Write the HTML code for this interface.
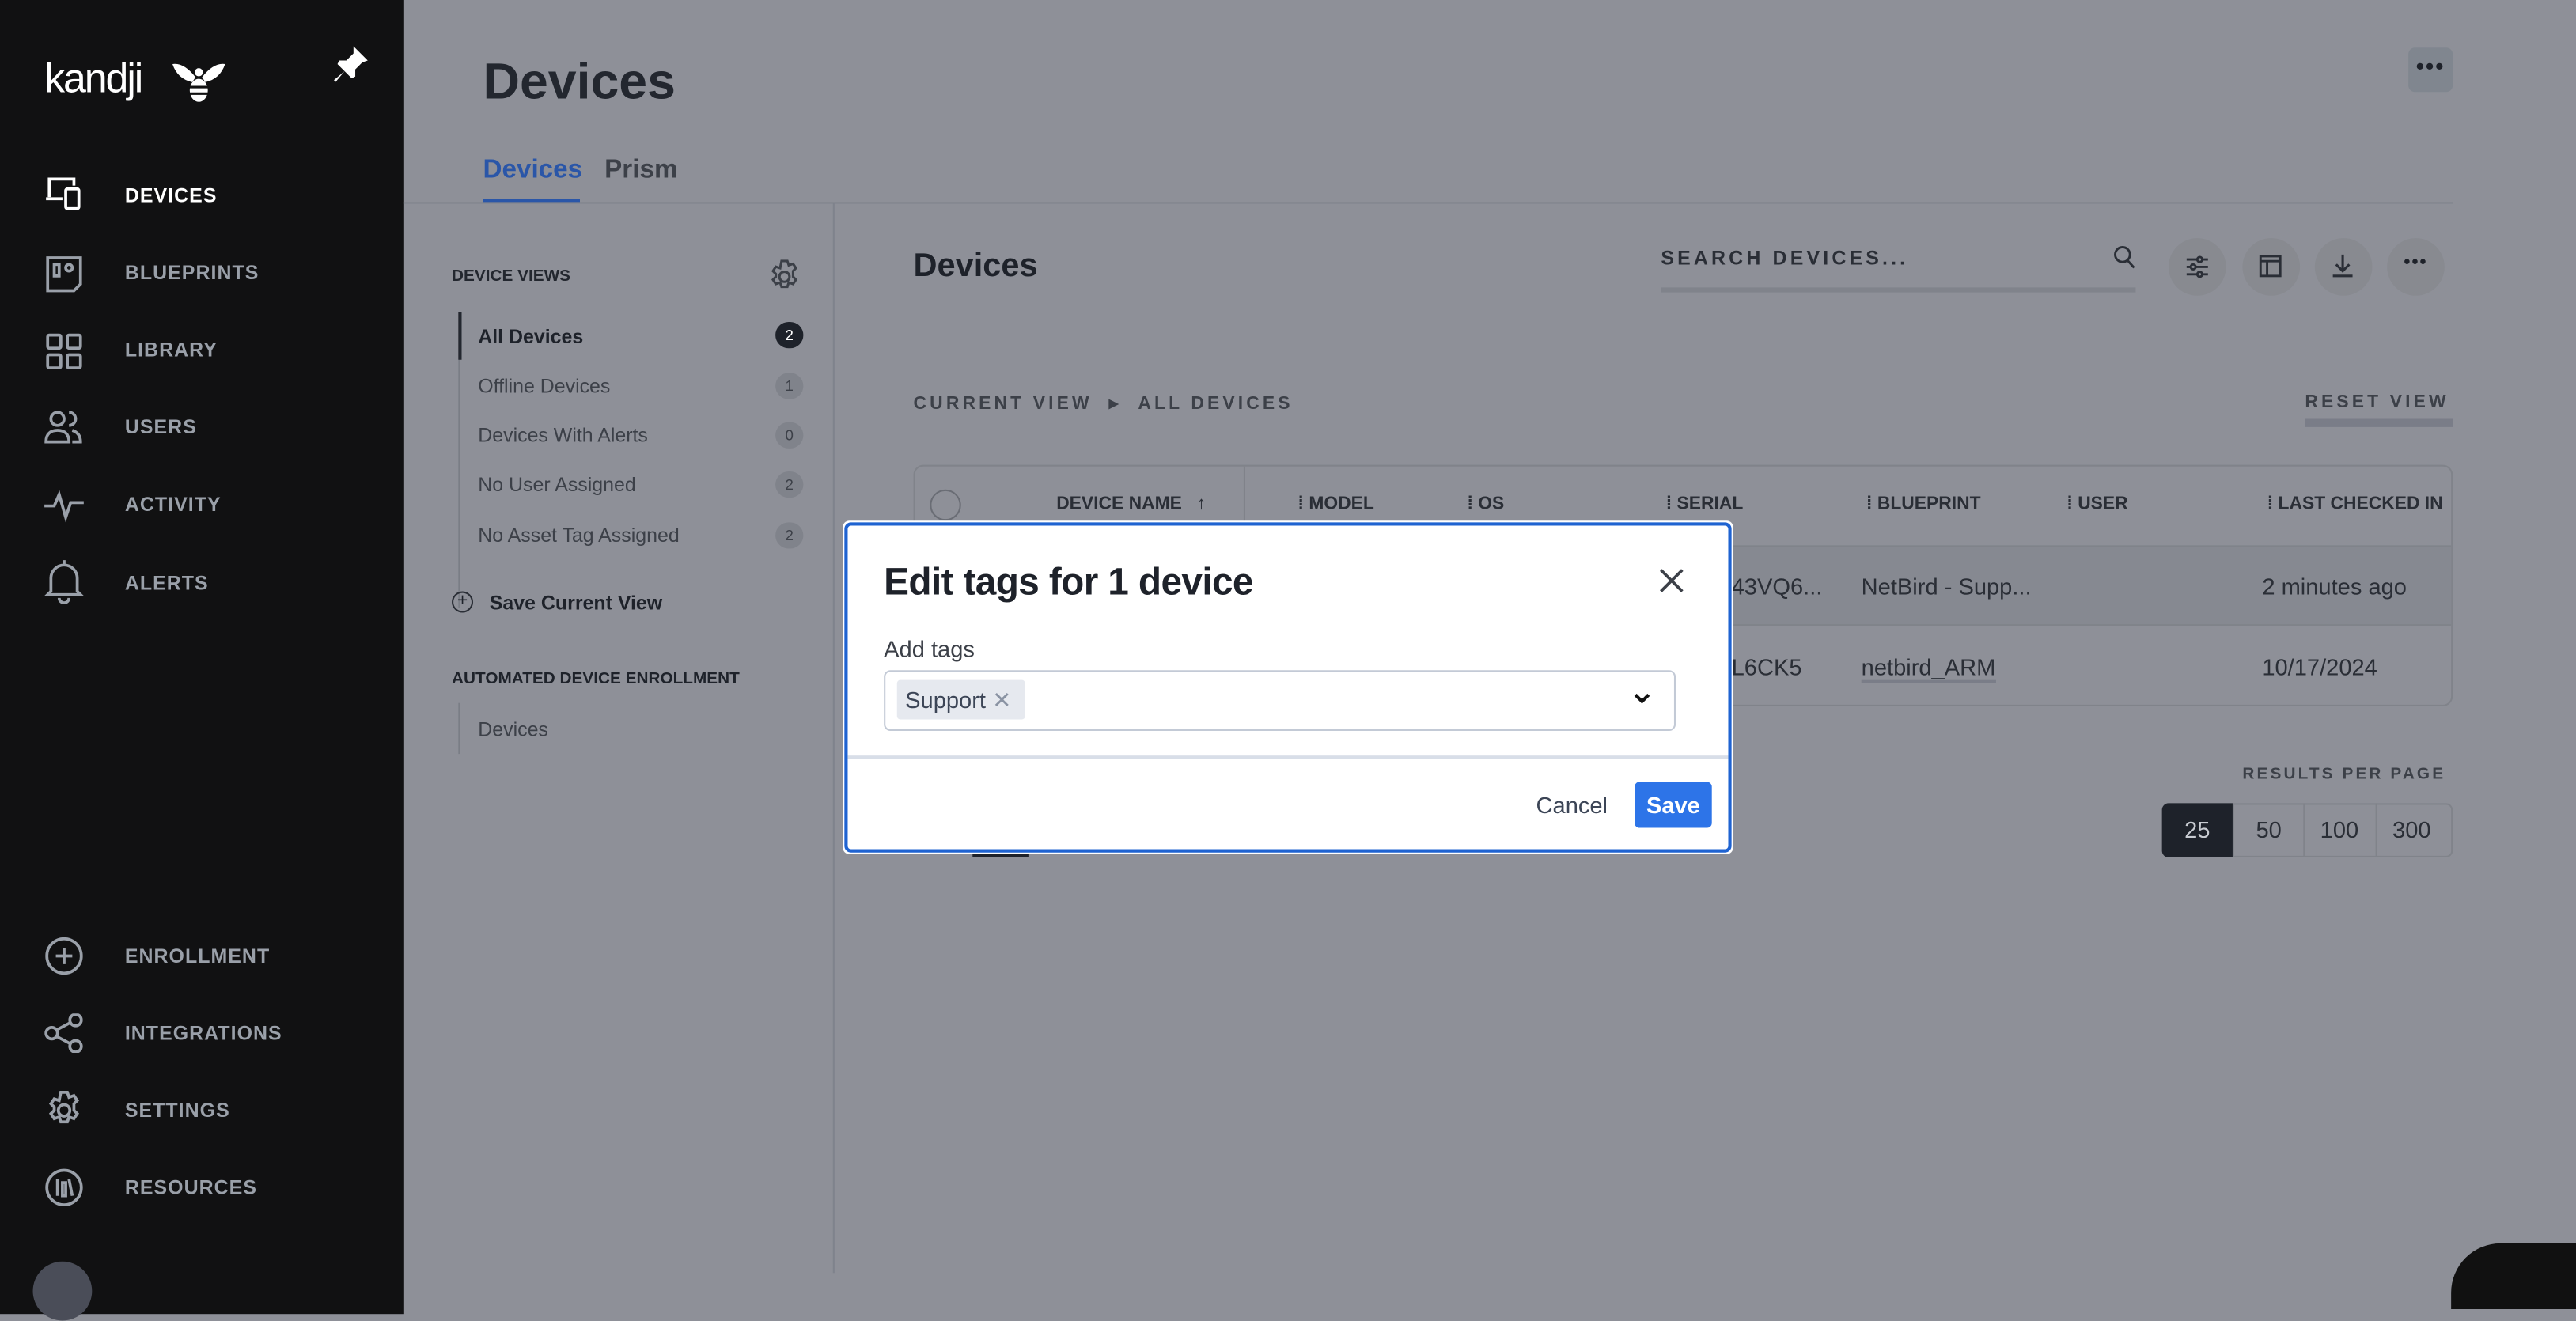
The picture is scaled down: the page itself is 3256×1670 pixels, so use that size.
<!DOCTYPE html>
<html><head><meta charset="utf-8"><style>
*{box-sizing:border-box;margin:0;padding:0}
html,body{width:3256px;height:1608px;overflow:hidden;background:#8e9098}
#w{position:absolute;left:0;top:0;width:1568px;height:775px;transform:scale(2.0765);transform-origin:0 0;font-family:"Liberation Sans",sans-serif;color:#1e222a}
.a{position:absolute}
#sb{left:0;top:0;width:246px;height:800px;background:#111112}
.ni{position:absolute;left:76px;font-size:12px;font-weight:bold;letter-spacing:.5px;color:#9aa0a9}
.ic{position:absolute;left:27px}
.dv{font-size:12px;color:#3c4048}
.bd{position:absolute;left:472px;width:17px;height:16px;border-radius:8px;background:#80838b;font-size:9px;text-align:center;line-height:16px;color:#3c4048}
.cb{position:absolute;top:145px;width:35px;height:35px;border-radius:50%;background:#888a90}
.th{position:absolute;top:301px;font-size:11px;font-weight:bold;color:#2a2e36}
.td{position:absolute;font-size:14px;color:#2a2e36}
.pg{position:absolute;top:489px;height:33px;width:43px;text-align:center;line-height:33px;font-size:14px;color:#2a2e36;border-left:1px solid #80838a}
</style></head><body><div id="w">
<div id="sb" class="a">
 <div class="a" style="left:27px;top:34px;font-size:25px;color:#fff;letter-spacing:-1px">kandji</div>
 <svg class="a" style="left:104px;top:36px" width="34" height="28" viewBox="0 0 34 28"><path d="M1 3 Q8 2 15 11 L13 14 Q4 12 1 3Z M33 3 Q26 2 19 11 L21 14 Q30 12 33 3Z" fill="#fff"/><circle cx="17" cy="8" r="2.5" fill="#fff"/><ellipse cx="17" cy="19" rx="5.5" ry="7" fill="#fff"/><path d="M11 17h12M11 21h12" stroke="#111" stroke-width="1.5"/></svg>
 <svg class="a" style="left:200px;top:26px" width="26" height="26" viewBox="0 0 24 24"><path d="M14 2l8 8-3 1-4 4 0 4-2 1-4-4-5 6-1-1 6-5-4-4 1-2h4l4-4z" fill="#fff"/></svg>
 <svg class="ic" style="top:107px" width="24" height="22" viewBox="0 0 24 22" fill="none" stroke="#fff" stroke-width="1.8"><path d="M3 13V2h15v4M1 14h10"/><rect x="13" y="8" width="8" height="12" rx="1"/></svg>
 <div class="ni" style="top:112px;color:#fff">DEVICES</div>
 <svg class="ic" style="top:155px" width="24" height="24" viewBox="0 0 24 24" fill="none" stroke="#9aa0a9" stroke-width="1.8"><path d="M2 2h20v16l-4 4H2z"/><rect x="6" y="6" width="3" height="7"/><circle cx="15" cy="8" r="2"/></svg>
 <div class="ni" style="top:159px">BLUEPRINTS</div>
 <svg class="ic" style="top:202px" width="24" height="24" viewBox="0 0 24 24" fill="none" stroke="#9aa0a9" stroke-width="1.8"><rect x="2" y="2" width="8" height="8" rx="1"/><rect x="14" y="2" width="8" height="8" rx="1"/><rect x="2" y="14" width="8" height="8" rx="1"/><rect x="14" y="14" width="8" height="8" rx="1"/></svg>
 <div class="ni" style="top:206px">LIBRARY</div>
 <svg class="ic" style="top:249px" width="24" height="22" viewBox="0 0 24 22" fill="none" stroke="#9aa0a9" stroke-width="1.8"><circle cx="8" cy="6" r="4"/><path d="M1 20c0-5 3-7 7-7s7 2 7 7z"/><path d="M15 2a4 4 0 010 8M17 13c3 1 5 3 5 7h-5" /></svg>
 <div class="ni" style="top:253px">USERS</div>
 <svg class="ic" style="top:296px" width="24" height="22" viewBox="0 0 24 22" fill="none" stroke="#9aa0a9" stroke-width="1.8"><path d="M0 12h6l3-7 4 14 3-9h8"/></svg>
 <div class="ni" style="top:300px">ACTIVITY</div>
 <svg class="ic" style="top:340px" width="24" height="28" viewBox="0 0 24 28" fill="none" stroke="#9aa0a9" stroke-width="1.8"><path d="M4 20V12a8 8 0 0116 0v8l2 2H2zM12 1v3M9 24a3 3 0 006 0"/></svg>
 <div class="ni" style="top:348px">ALERTS</div>
 <svg class="ic" style="top:570px" width="24" height="24" viewBox="0 0 24 24" fill="none" stroke="#9aa0a9" stroke-width="1.8"><circle cx="12" cy="12" r="10.5"/><path d="M12 7v10M7 12h10"/></svg>
 <div class="ni" style="top:575px">ENROLLMENT</div>
 <svg class="ic" style="top:617px" width="24" height="24" viewBox="0 0 24 24" fill="none" stroke="#9aa0a9" stroke-width="1.8"><circle cx="4.5" cy="12" r="3.5"/><circle cx="19" cy="4" r="3.5"/><circle cx="19" cy="20" r="3.5"/><path d="M7.5 10l8.5-4.5M7.5 14l8.5 4.5"/></svg>
 <div class="ni" style="top:622px">INTEGRATIONS</div>
 <svg class="ic" style="top:664px" width="24" height="24" viewBox="0 0 24 24" fill="none" stroke="#9aa0a9" stroke-width="1.8"><circle cx="12" cy="12" r="3.5"/><path d="M10 1h4l1 3 3-1 2 3-2 2v4l2 2-2 3-3-1-1 3h-4l-1-3-3 1-2-3 2-2V10L4 8l2-3 3 1z"/></svg>
 <div class="ni" style="top:669px">SETTINGS</div>
 <svg class="ic" style="top:711px" width="24" height="24" viewBox="0 0 24 24" fill="none" stroke="#9aa0a9" stroke-width="1.8"><circle cx="12" cy="12" r="10.5"/><path d="M8 7v10M11 9v8h2V9zM15 7l2 10"/></svg>
 <div class="ni" style="top:716px">RESOURCES</div>
 <div class="a" style="left:20px;top:768px;width:36px;height:36px;border-radius:50%;background:#4a4d58"></div>
</div>
<div class="a" style="left:294px;top:32px;font-size:31px;font-weight:bold;color:#23272f">Devices</div>
<div class="a" style="left:1466px;top:29px;width:27px;height:27px;border-radius:4px;background:#80868f;text-align:center;font-size:14px;line-height:22px;font-weight:bold;letter-spacing:1px">•••</div>
<div class="a" style="left:294px;top:95px;font-size:16px;font-weight:bold;color:#2a56a8">Devices</div>
<div class="a" style="left:368px;top:95px;font-size:16px;font-weight:bold;color:#3c4048">Prism</div>
<div class="a" style="left:294px;top:121px;width:59px;height:2px;background:#2a56a8"></div>
<div class="a" style="left:246px;top:123px;width:1247px;height:1px;background:#7f838c"></div>
<div class="a" style="left:507px;top:124px;width:1px;height:651px;background:#7f838c"></div>
<div class="a" style="left:275px;top:163px;font-size:10px;font-weight:bold;color:#23272f">DEVICE VIEWS</div>
<svg class="a" style="left:467px;top:158px" width="21" height="21" viewBox="0 0 24 24" fill="none" stroke="#3c4048" stroke-width="1.7"><circle cx="12" cy="12" r="3.5"/><path d="M10 1h4l1 3 3-1 2 3-2 2v4l2 2-2 3-3-1-1 3h-4l-1-3-3 1-2-3 2-2V10L4 8l2-3 3 1z"/></svg>
<div class="a" style="left:279px;top:190px;width:1px;height:180px;background:#7a7d85"></div>
<div class="a" style="left:279px;top:190px;width:2px;height:29px;background:#23272f"></div>
<div class="a dv" style="left:291px;top:198px;font-weight:bold;color:#1e222a">All Devices</div><div class="bd" style="top:196px;background:#1e222a;color:#fff">2</div>
<div class="a dv" style="left:291px;top:228px">Offline Devices</div><div class="bd" style="top:227px">1</div>
<div class="a dv" style="left:291px;top:258px">Devices With Alerts</div><div class="bd" style="top:257px">0</div>
<div class="a dv" style="left:291px;top:288px">No User Assigned</div><div class="bd" style="top:287px">2</div>
<div class="a dv" style="left:291px;top:319px">No Asset Tag Assigned</div><div class="bd" style="top:318px">2</div>
<div class="a" style="left:275px;top:360px;width:13px;height:13px;border:1.2px solid #2a2e36;border-radius:50%;font-size:11px;line-height:10px;text-align:center">+</div>
<div class="a" style="left:298px;top:360px;font-size:12px;font-weight:bold">Save Current View</div>
<div class="a" style="left:275px;top:408px;font-size:10px;font-weight:bold">AUTOMATED DEVICE ENROLLMENT</div>
<div class="a" style="left:279px;top:428px;width:1px;height:31px;background:#7a7d85"></div>
<div class="a dv" style="left:291px;top:437px">Devices</div>
<div class="a" style="left:556px;top:151px;font-size:20px;font-weight:bold">Devices</div>
<div class="a" style="left:1011px;top:150px;font-size:12px;font-weight:bold;letter-spacing:2px;color:#2a2e36">SEARCH DEVICES...</div>
<div class="a" style="left:1011px;top:175px;width:289px;height:3px;background:#80838b"></div>
<svg class="a" style="left:1286px;top:149px" width="14" height="15" viewBox="0 0 14 15" fill="none" stroke="#2a2e36" stroke-width="1.4"><circle cx="6" cy="6" r="4.5"/><path d="M9 9.5l4 4.5"/></svg>
<div class="cb" style="left:1320px"></div><div class="cb" style="left:1365px"></div><div class="cb" style="left:1409px"></div><div class="cb" style="left:1453px"></div>
<svg class="a" style="left:1330px;top:155px" width="15" height="15" viewBox="0 0 15 15" fill="none" stroke="#2a2e36" stroke-width="1.4"><path d="M1 3h13M1 7.5h13M1 12h13"/><circle cx="9" cy="3" r="1.5" fill="#888a90"/><circle cx="5" cy="7.5" r="1.5" fill="#888a90"/><circle cx="9" cy="12" r="1.5" fill="#888a90"/></svg>
<svg class="a" style="left:1375px;top:155px" width="14" height="14" viewBox="0 0 14 14" fill="none" stroke="#2a2e36" stroke-width="1.4"><rect x="1" y="1" width="12" height="12"/><path d="M1 4h12M5 4v9"/></svg>
<svg class="a" style="left:1419px;top:154px" width="14" height="15" viewBox="0 0 14 15" fill="none" stroke="#2a2e36" stroke-width="1.5"><path d="M7 1v10M3 7l4 4 4-4M1 14h12"/></svg>
<div class="a" style="left:1453px;top:154px;width:35px;text-align:center;font-size:11px;font-weight:bold;letter-spacing:1px">•••</div>
<div class="a" style="left:556px;top:239px;font-size:11px;font-weight:bold;letter-spacing:2px;color:#3c4048">CURRENT VIEW &nbsp;▸ &nbsp;ALL DEVICES</div>
<div class="a" style="left:1403px;top:239px;font-size:11px;font-weight:bold;letter-spacing:2px;color:#3c4048">RESET VIEW</div>
<div class="a" style="left:1403px;top:255px;width:90px;height:5px;background:#7a7d88"></div>
<div class="a" style="left:556px;top:283px;width:937px;height:147px;border:1px solid #80838a;border-radius:6px;background:#8e9098;overflow:hidden">
 <div class="a" style="left:0;top:48px;width:937px;height:49px;background:#868991;border-top:1px solid #80838a;border-bottom:1px solid #80838a"></div>
</div>
<div class="a" style="left:566px;top:298px;width:19px;height:19px;border:1.3px solid #6a6d75;border-radius:50%"></div>
<div class="th" style="left:643px">DEVICE NAME &nbsp; ↑</div>
<div class="a" style="left:757px;top:284px;width:1px;height:48px;background:#80838a"></div>
<div class="th" style="left:790px">⁞ MODEL</div><div class="th" style="left:893px">⁞ OS</div><div class="th" style="left:1014px">⁞ SERIAL</div><div class="th" style="left:1136px">⁞ BLUEPRINT</div><div class="th" style="left:1258px">⁞ USER</div><div class="th" style="left:1380px">⁞ LAST CHECKED IN</div>
<div class="td" style="left:1054px;top:349px">43VQ6...</div><div class="td" style="left:1133px;top:349px">NetBird - Supp...</div><div class="td" style="left:1377px;top:349px">2 minutes ago</div>
<div class="td" style="left:1054px;top:398px">L6CK5</div><div class="td" style="left:1133px;top:398px;border-bottom:2px solid #7a7d88">netbird_ARM</div><div class="td" style="left:1377px;top:398px">10/17/2024</div>
<div class="a" style="left:1365px;top:466px;font-size:10px;font-weight:bold;letter-spacing:1.5px;color:#3c4048">RESULTS PER PAGE</div>
<div class="a" style="left:1316px;top:489px;width:177px;height:33px;border:1px solid #80838a;border-radius:4px;overflow:hidden"></div>
<div class="pg" style="left:1316px;background:#1e222a;color:#c8cbd1;border:0;border-radius:4px 0 0 4px">25</div><div class="pg" style="left:1359px">50</div><div class="pg" style="left:1402px">100</div><div class="pg" style="left:1446px">300</div>
<div class="a" style="left:592px;top:517px;width:34px;height:5px;background:#1e222a"></div>
<div class="a" style="left:1492px;top:757px;width:80px;height:40px;border-radius:30px 0 0 0;background:#111"></div>
<div class="a" style="left:513px;top:317px;width:542px;height:203px;background:#fff;border-radius:4px;padding:1px">
 <div style="position:relative;width:540px;height:201px;border:2px solid #1f63d1;border-radius:4px">
  <div class="a" style="left:22px;top:21px;font-size:23px;font-weight:bold;color:#1e222a;letter-spacing:-.3px">Edit tags for 1 device</div>
  <svg class="a" style="left:494px;top:26px" width="15" height="15" viewBox="0 0 15 15" stroke="#3c4048" stroke-width="1.8"><path d="M1 1l13 13M14 1L1 14"/></svg>
  <div class="a" style="left:22px;top:67px;font-size:14px;color:#3c4048">Add tags</div>
  <div class="a" style="left:22px;top:88px;width:482px;height:37px;border:1.5px solid #c3cad6;border-radius:4px">
   <div class="a" style="left:7px;top:5px;width:78px;height:24px;background:#e6e9ef;border-radius:2px;font-size:14px;color:#3c4556;padding:4px 0 0 5px">Support <span style="color:#8a93a3">✕</span></div>
   <svg class="a" style="left:455px;top:12px" width="11" height="9" viewBox="0 0 11 9" fill="none" stroke="#111" stroke-width="2"><path d="M1.5 2l4 4 4-4"/></svg>
  </div>
  <div class="a" style="left:0;top:140px;width:536px;height:1.5px;background:#d8dee8"></div>
  <div class="a" style="left:419px;top:162px;font-size:14px;color:#3c4556">Cancel</div>
  <div class="a" style="left:479px;top:156px;width:47px;height:28px;background:#2d74e8;border-radius:3px;color:#fff;font-size:14px;font-weight:bold;text-align:center;line-height:28px">Save</div>
 </div>
</div>
</div></body></html>
